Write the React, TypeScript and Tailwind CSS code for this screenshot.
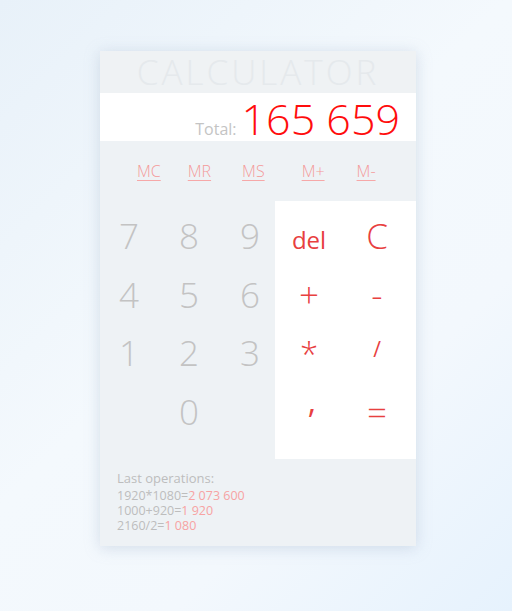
const memory = [
  { label: 'MC', ml: 'ml-[37px]' },
  { label: 'MR', ml: 'ml-[27px]' },
  { label: 'MS', ml: 'ml-[31px]' },
  { label: 'M+', ml: 'ml-[37px]' },
  { label: 'M-', ml: 'ml-[32px]' },
]

const digits = ['7', '8', '9', '4', '5', '6', '1', '2', '3', '', '0', '']

const history = [
  { op: '1920*1080=', res: '2 073 600' },
  { op: '1000+920=', res: '1 920' },
  { op: '2160/2=', res: '1 080' },
]

export default function App() {
  return (
    <div className="min-h-screen w-full bg-[linear-gradient(135deg,#e8f1f9_0%,#f4f9fd_45%,#f3f8fd_70%,#e6f2fd_100%)] flex justify-center pt-[51px] pl-[4px] font-['Open_Sans',sans-serif]">
      <div className="w-[316px] h-[495px] bg-[#eef2f5] shadow-[0_2px_14px_rgba(150,170,195,0.35)] flex flex-col">
        {/* Title */}
        <div className="h-[42px] text-center text-[35px] leading-[42px] tracking-[3px] font-light text-[#e5e9ec] bg-[#eff2f4]">
          CALCULATOR
        </div>

        {/* Display */}
        <div className="h-[48px] bg-white flex justify-end items-baseline pr-4">
          <span className="text-[16px] text-[#c4c4c4] mr-[5px]">Total:</span>
          <span className="text-[43px] leading-[51px] font-light text-[#ff0d0d]">165 659</span>
        </div>

        {/* Memory */}
        <div className="h-[60px] flex items-center text-[16px] font-light text-[#f49a9a]">
          {memory.map((m) => (
            <span key={m.label} className={`${m.ml} underline underline-offset-[3px] decoration-[#f6a8a8]`}>
              {m.label}
            </span>
          ))}
        </div>

        {/* Keypad */}
        <div className="h-[258px] flex">
          <div className="w-[175px] grid grid-cols-[58px_62px_60px] auto-rows-[58.5px] pt-[6px] text-[35px] leading-[58.5px] font-light text-[#c3c3c3] text-center">
            {digits.map((d, i) => (
              <div key={i}>{d}</div>
            ))}
          </div>
          <div className="flex-1 bg-white grid grid-cols-[68px_68px] auto-rows-[58.5px] pt-[6px] text-[35px] leading-[58.5px] font-light text-[#e8403f] text-center">
            <div>
              <span className="text-[24px] font-normal">del</span>
            </div>
            <div>C</div>
            <div>+</div>
            <div>-</div>
            <div>
              <span className="inline-block text-[33px]">*</span>
            </div>
            <div>
              <span className="inline-block text-[21px] font-normal -translate-y-[9px]">/</span>
            </div>
            <div>
              <span className="inline-block text-[32px] font-normal -translate-y-[12px] translate-x-[3px]">,</span>
            </div>
            <div>=</div>
          </div>
        </div>

        {/* History */}
        <div className="flex-1 pt-[11px] pl-[17px] text-[#bdbdbd]">
          <div className="text-[13px] leading-[17px]">Last operations:</div>
          <div className="mt-px text-[12.5px] leading-[15px]">
            {history.map((h) => (
              <div key={h.op}>
                {h.op}
                <span className="text-[#f7a3a3]">{h.res}</span>
              </div>
            ))}
          </div>
        </div>
      </div>
    </div>
  )
}
